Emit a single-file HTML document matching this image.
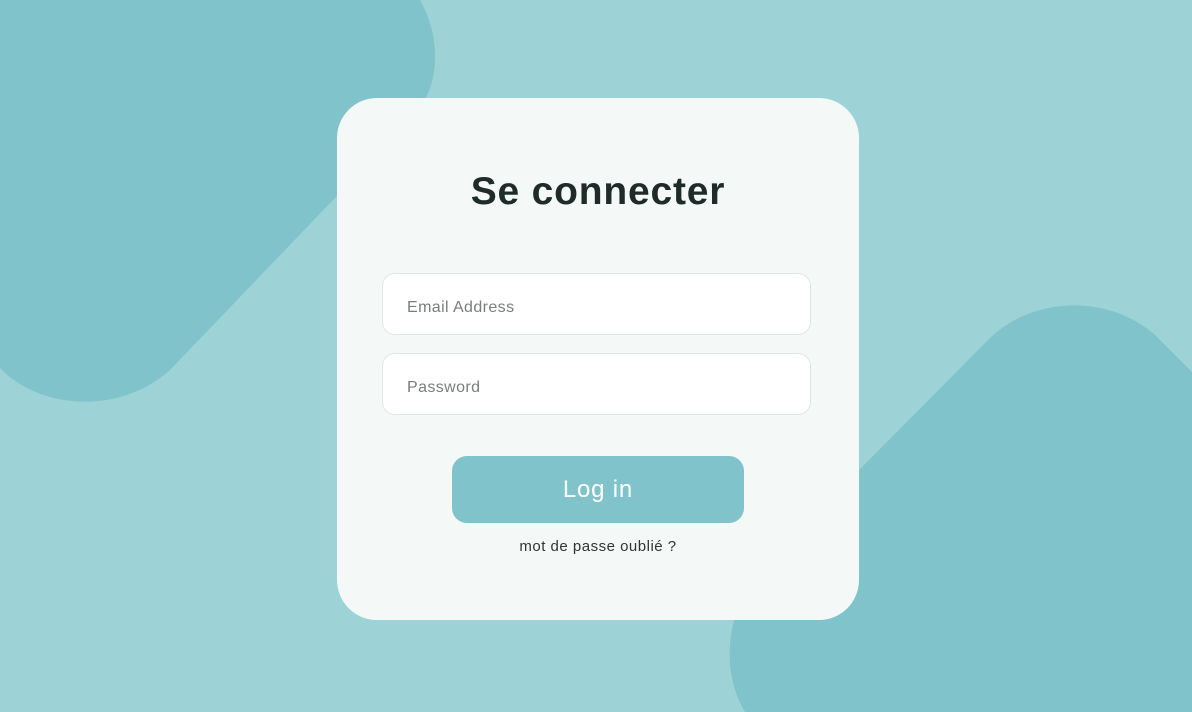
<!DOCTYPE html>
<html><head><meta charset="utf-8"><style>
*{margin:0;padding:0;box-sizing:border-box}
body{width:1192px;height:712px;overflow:hidden;background:#9dd3d7;position:relative;font-family:"Liberation Sans",sans-serif}
svg.bg{position:absolute;left:0;top:0}
.card{position:absolute;left:337px;top:98px;width:522px;height:522px;background:#f4f9f8;border-radius:40px}
h1{position:absolute;left:0;right:0;text-align:center;font-size:39px;font-weight:bold;color:#1f2b28;letter-spacing:0.8px}
.inp{position:absolute;left:45px;width:429px;height:62px;background:#fff;border:1px solid #e0e6e6;border-radius:13px;font-size:16px;color:#7a7d7d;padding-left:24px;padding-top:4px;line-height:60px;letter-spacing:0.4px}
.btn{position:absolute;left:115px;top:358px;width:292px;height:67px;background:#80c3cb;border-radius:15px;color:#fff;font-size:24px;text-align:center;line-height:67px;letter-spacing:0.8px}
.lnk{position:absolute;left:0;right:0;top:440px;text-align:center;font-size:15px;color:#333;letter-spacing:0.5px}
</style></head><body>
<svg class="bg" width="1192" height="712">
<path fill="#80c3cb" d="M0 0 H420 C440 35 445 90 405 125 L170 370 C120 415 40 410 0 368 Z"/>
<path fill="#80c3cb" d="M1192 372 L1155 335 C1110 295 1035 295 990 338 L765 565 C722 610 722 675 745 712 H1192 Z"/>
</svg>
<div class="card">
<h1 style="top:72px">Se connecter</h1>
<div class="inp" style="top:175px">Email Address</div>
<div class="inp" style="top:255px">Password</div>
<div class="btn">Log in</div>
<div class="lnk">mot de passe oublié ?</div>
</div>
</body></html>
